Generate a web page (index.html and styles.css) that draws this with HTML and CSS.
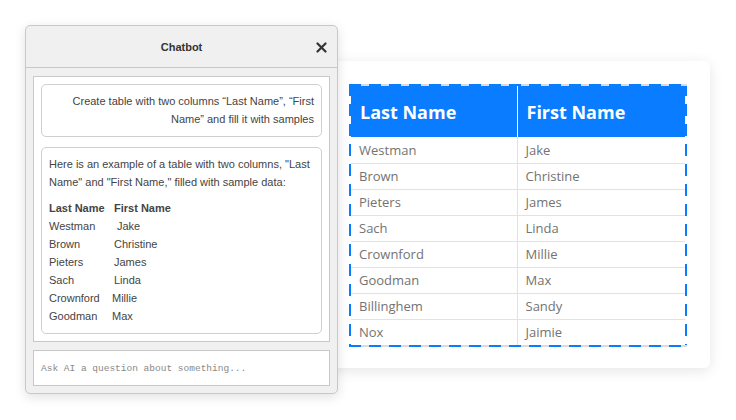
FILE: index.html
```html
<!DOCTYPE html>
<html>
<head>
<meta charset="utf-8">
<link rel="stylesheet" href="styles.css">
</head>
<body>
<div class="stage">
  <div class="card">
    <div class="table-wrap">
      <table class="names">
        <thead>
          <tr><th>Last Name</th><th>First Name</th></tr>
        </thead>
        <tbody>
          <tr><td>Westman</td><td>Jake</td></tr>
          <tr><td>Brown</td><td>Christine</td></tr>
          <tr><td>Pieters</td><td>James</td></tr>
          <tr><td>Sach</td><td>Linda</td></tr>
          <tr><td>Crownford</td><td>Millie</td></tr>
          <tr><td>Goodman</td><td>Max</td></tr>
          <tr><td>Billinghem</td><td>Sandy</td></tr>
          <tr><td>Nox</td><td>Jaimie</td></tr>
        </tbody>
      </table>
    </div>
  </div>

  <div class="chatbot">
    <div class="chat-header">
      <span class="chat-title">Chatbot</span>
      <span class="close">
        <svg width="11" height="11" viewBox="0 0 11 11"><path d="M1.5 1.5 L9.5 9.5 M9.5 1.5 L1.5 9.5" stroke="#333" stroke-width="2.2" stroke-linecap="round"/></svg>
      </span>
    </div>
    <div class="chat-body">
      <div class="messages">
        <div class="msg msg-user">Create table with two columns “Last Name”, “First Name” and fill it with samples</div>
        <div class="msg msg-bot">
          <p class="intro">Here is an example of a table with two columns, "Last Name" and "First Name," filled with sample data:</p>
          <div class="mini">
            <div class="mini-row head"><span>Last Name</span><span>First Name</span></div>
            <div class="mini-row"><span>Westman</span><span class="r3">Jake</span></div>
            <div class="mini-row"><span>Brown</span><span>Christine</span></div>
            <div class="mini-row"><span>Pieters</span><span>James</span></div>
            <div class="mini-row"><span>Sach</span><span>Linda</span></div>
            <div class="mini-row"><span>Crownford</span><span class="l2">Millie</span></div>
            <div class="mini-row"><span>Goodman</span><span class="l2">Max</span></div>
          </div>
        </div>
      </div>
      <div class="ask">Ask AI a question about something...</div>
    </div>
  </div>
</div>
</body>
</html>
```

FILE: styles.css
```css
* { box-sizing: border-box; }
html, body { margin: 0; padding: 0; background: #fff; }
body { width: 736px; height: 420px; overflow: hidden; }

.stage { position: relative; width: 736px; height: 420px; padding-top: 61px; }

.card {
  margin-left: 326px;
  width: 384px;
  height: 307px;
  background: #fff;
  border-radius: 6px;
  box-shadow: 0 3px 14px rgba(0,0,0,0.10);
  padding: 23px;
}

.table-wrap {
  width: 338px;
  padding: 2px;
  background:
    repeating-linear-gradient(90deg, #0a7cff 0 12px, #dcdcdc 12px 20px) left top / 100% 2px no-repeat,
    repeating-linear-gradient(90deg, #0a7cff 0 12px, #dcdcdc 12px 20px) left bottom / 100% 2px no-repeat,
    repeating-linear-gradient(180deg, #0a7cff 0 12px, #ffffff 12px 20px) left top / 2px 100% no-repeat,
    repeating-linear-gradient(180deg, #0a7cff 0 12px, #ffffff 12px 20px) right top / 2px 100% no-repeat,
    #fff;
}

.names {
  width: 100%;
  border-collapse: collapse;
  font-family: "Open Sans", "Liberation Sans", sans-serif;
  table-layout: fixed;
  background: #fff;
}
.names th {
  background: #0a7cff;
  color: #fff;
  font-size: 18px;
  font-weight: 700;
  text-align: left;
  height: 51px;
  padding: 0 0 0 9px;
  border-left: 1px solid #fff;
}
.names th:first-child { border-left: none; width: 166px; }
.names td {
  color: #737373;
  font-size: 13px;
  height: 26px;
  padding: 0 0 0 8px;
  border-top: 1px solid #e2e2e2;
  border-left: 1px solid #e2e2e2;
}
.names td:first-child { border-left: none; }
.names tbody tr:first-child td { border-top: none; }

.chatbot {
  position: absolute;
  left: 25px;
  top: 25px;
  width: 313px;
  height: 369px;
  background: #f0f0f0;
  border: 1px solid #c8c8c8;
  border-radius: 5px;
  box-shadow: 0 3px 12px rgba(0,0,0,0.12);
  font-family: "Liberation Sans", Arial, sans-serif;
  color: #444;
  display: flex;
  flex-direction: column;
}

.chat-header {
  height: 43px;
  border-bottom: 1px solid #c8c8c8;
  display: flex;
  align-items: center;
  justify-content: center;
  position: relative;
}
.chat-title { font-size: 11px; font-weight: 700; color: #333; }
.close { position: absolute; right: 10px; top: 16px; display: block; line-height: 0; }

.chat-body {
  flex: 1;
  padding: 8px 7px 7px 7px;
  display: flex;
  flex-direction: column;
  gap: 8px;
}

.messages {
  height: 266px;
  background: #fff;
  border: 1px solid #c8c8c8;
  padding: 7px 7px;
  display: flex;
  flex-direction: column;
  gap: 10px;
}

.msg {
  border: 1px solid #cfcfcf;
  border-radius: 5px;
  font-size: 11px;
  line-height: 18px;
  color: #444;
  padding: 7px 7px 8px 7px;
}
.msg-user { text-align: right; padding-left: 20px; }
.intro { margin: 0 0 8px 0; }

.mini-row { display: flex; line-height: 18px; }
.mini-row span:first-child { width: 65px; }
.mini-row.head { font-weight: 700; }
.r3 { margin-left: 3px; }
.l2 { margin-left: -2px; }

.ask {
  height: 36px;
  background: #fff;
  border: 1px solid #c8c8c8;
  font-family: "Liberation Mono", "Courier New", monospace;
  font-size: 9.5px;
  color: #888;
  padding: 0 7px;
  display: flex;
  align-items: center;
}
```
